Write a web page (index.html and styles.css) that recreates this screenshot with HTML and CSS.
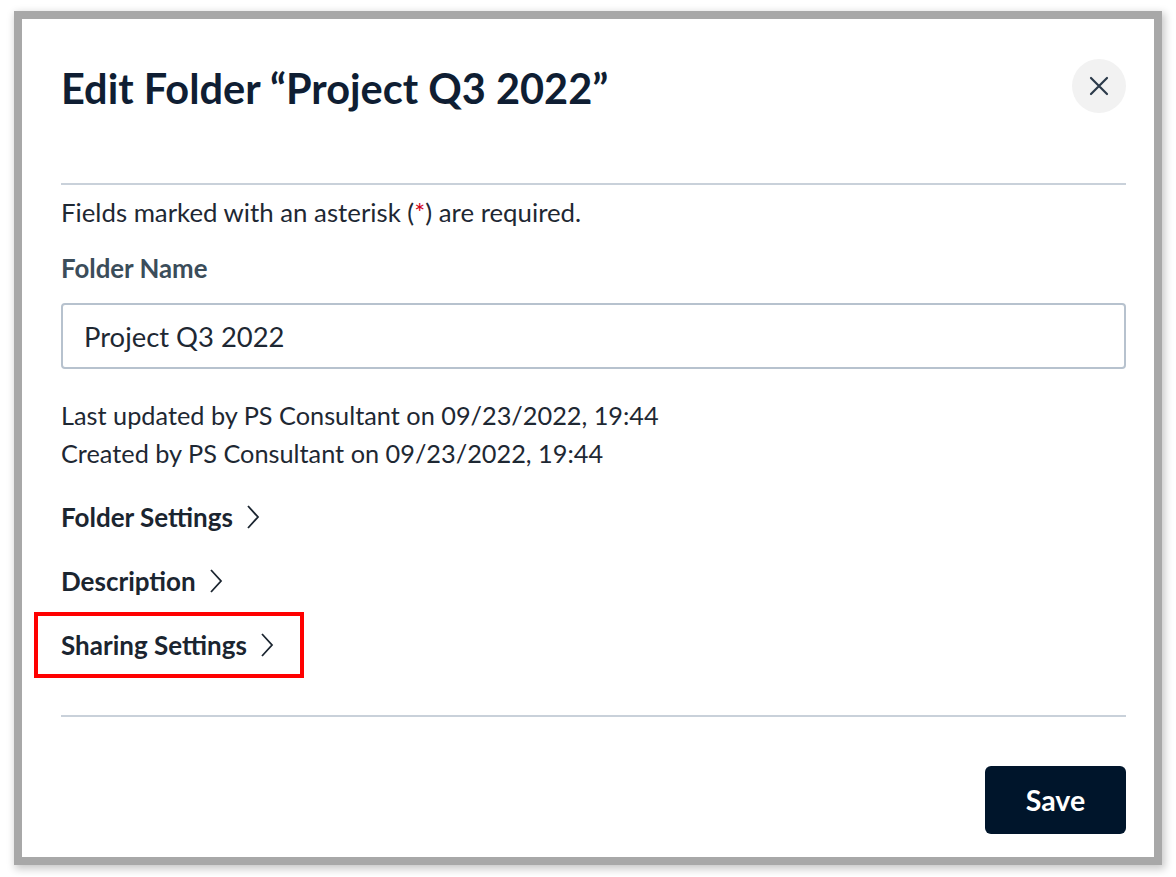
FILE: index.html
```html
<!DOCTYPE html>
<html lang="en">
<head>
    <meta charset="UTF-8">
    <meta name="viewport" content="width=device-width, initial-scale=1.0">
    <title>Edit Folder</title>
    <link rel="stylesheet" href="styles.css">
</head>
<body>
    <div class="dialog">
        <div class="dialog-header">
            <h1>Edit Folder “Project Q3 2022”</h1>
            <button class="close-btn" aria-label="Close">
                <svg width="20" height="20" viewBox="0 0 20 20">
                    <path d="M2 2 L18 18 M18 2 L2 18" stroke="#2b3a4a" stroke-width="2.2" stroke-linecap="round" fill="none"/>
                </svg>
            </button>
        </div>
        <hr class="divider">

        <p class="required-note">Fields marked with an asterisk (<span class="asterisk">*</span>) are required.</p>

        <label class="field-label" for="folderName">Folder Name</label>
        <input type="text" id="folderName" class="text-input" value="Project Q3 2022">

        <div class="meta">
            <p>Last updated by PS Consultant on 09/23/2022, 19:44</p>
            <p>Created by PS Consultant on 09/23/2022, 19:44</p>
        </div>

        <ul class="sections">
            <li><a class="section-link" href="#">Folder Settings
                <svg class="chevron" width="14" height="26" viewBox="0 0 14 26"><path d="M2 2 L12 13 L2 24" stroke="#1b2530" stroke-width="1.8" fill="none"/></svg>
            </a></li>
            <li><a class="section-link" href="#">Description
                <svg class="chevron" width="14" height="26" viewBox="0 0 14 26"><path d="M2 2 L12 13 L2 24" stroke="#1b2530" stroke-width="1.8" fill="none"/></svg>
            </a></li>
            <li><a class="section-link highlighted" href="#">Sharing Settings
                <svg class="chevron" width="14" height="26" viewBox="0 0 14 26"><path d="M2 2 L12 13 L2 24" stroke="#1b2530" stroke-width="1.8" fill="none"/></svg>
            </a></li>
        </ul>

        <hr class="divider footer-divider">

        <div class="dialog-footer">
            <button class="save-btn">Save</button>
        </div>
    </div>
</body>
</html>
```

FILE: styles.css
```css
* {
    margin: 0;
    padding: 0;
    box-sizing: border-box;
    font-family: 'Lato', 'Liberation Sans', sans-serif;
}

body {
    background: #ffffff;
    padding: 19px 22px;
}

.dialog {
    width: 1132px;
    height: 838px;
    background: #fff;
    padding: 0 28px 0 39px;
    box-shadow: 0 0 0 8px #a8a8a8, 2px 3px 8px 9px rgba(0, 0, 0, 0.22);
}

/* Header */
.dialog-header {
    display: flex;
    justify-content: space-between;
    align-items: flex-start;
    padding-top: 40px;
    margin-bottom: 66px;
}

h1 {
    font-size: 41.5px;
    line-height: 58px;
    font-weight: 700;
    color: #0f1e33;
}

.close-btn {
    width: 54px;
    height: 54px;
    border: none;
    border-radius: 50%;
    background: #f2f2f2;
    display: flex;
    align-items: center;
    justify-content: center;
    cursor: pointer;
}

.divider {
    border: none;
    border-top: 2px solid #c9d1da;
}

/* Body */
.required-note {
    margin-top: 12px;
    font-size: 25.8px;
    line-height: 30px;
    color: #1e2833;
}

.asterisk {
    color: #d0021b;
}

.field-label {
    display: block;
    margin-top: 26px;
    font-size: 25.8px;
    line-height: 30px;
    font-weight: 700;
    color: #3b4d5a;
}

.text-input {
    display: block;
    width: 100%;
    height: 66px;
    margin-top: 20px;
    padding: 0 21px;
    border: 2px solid #b7c2ce;
    border-radius: 4px;
    font-size: 27.4px;
    color: #1e2833;
    outline: none;
}

.meta {
    margin-top: 27px;
}

.meta p {
    font-size: 25.3px;
    line-height: 38px;
    color: #1e2833;
}

.sections {
    list-style: none;
    margin-top: 26px;
    display: flex;
    flex-direction: column;
    gap: 26px;
}

.section-link {
    position: relative;
    display: inline-flex;
    align-items: center;
    gap: 13px;
    height: 38px;
    font-size: 26px;
    font-weight: 700;
    color: #1b2530;
    text-decoration: none;
}

.section-link.highlighted::after {
    content: '';
    position: absolute;
    left: -27px;
    right: -30px;
    top: -14px;
    bottom: -14px;
    border: 4px solid #ff0000;
}

.footer-divider {
    margin-top: 51px;
}

/* Footer */
.dialog-footer {
    display: flex;
    justify-content: flex-end;
    margin-top: 49px;
}

.save-btn {
    width: 141px;
    height: 68px;
    border: none;
    border-radius: 6px;
    background: #00152b;
    color: #fff;
    font-size: 28.5px;
    font-weight: 700;
    cursor: pointer;
}
```
